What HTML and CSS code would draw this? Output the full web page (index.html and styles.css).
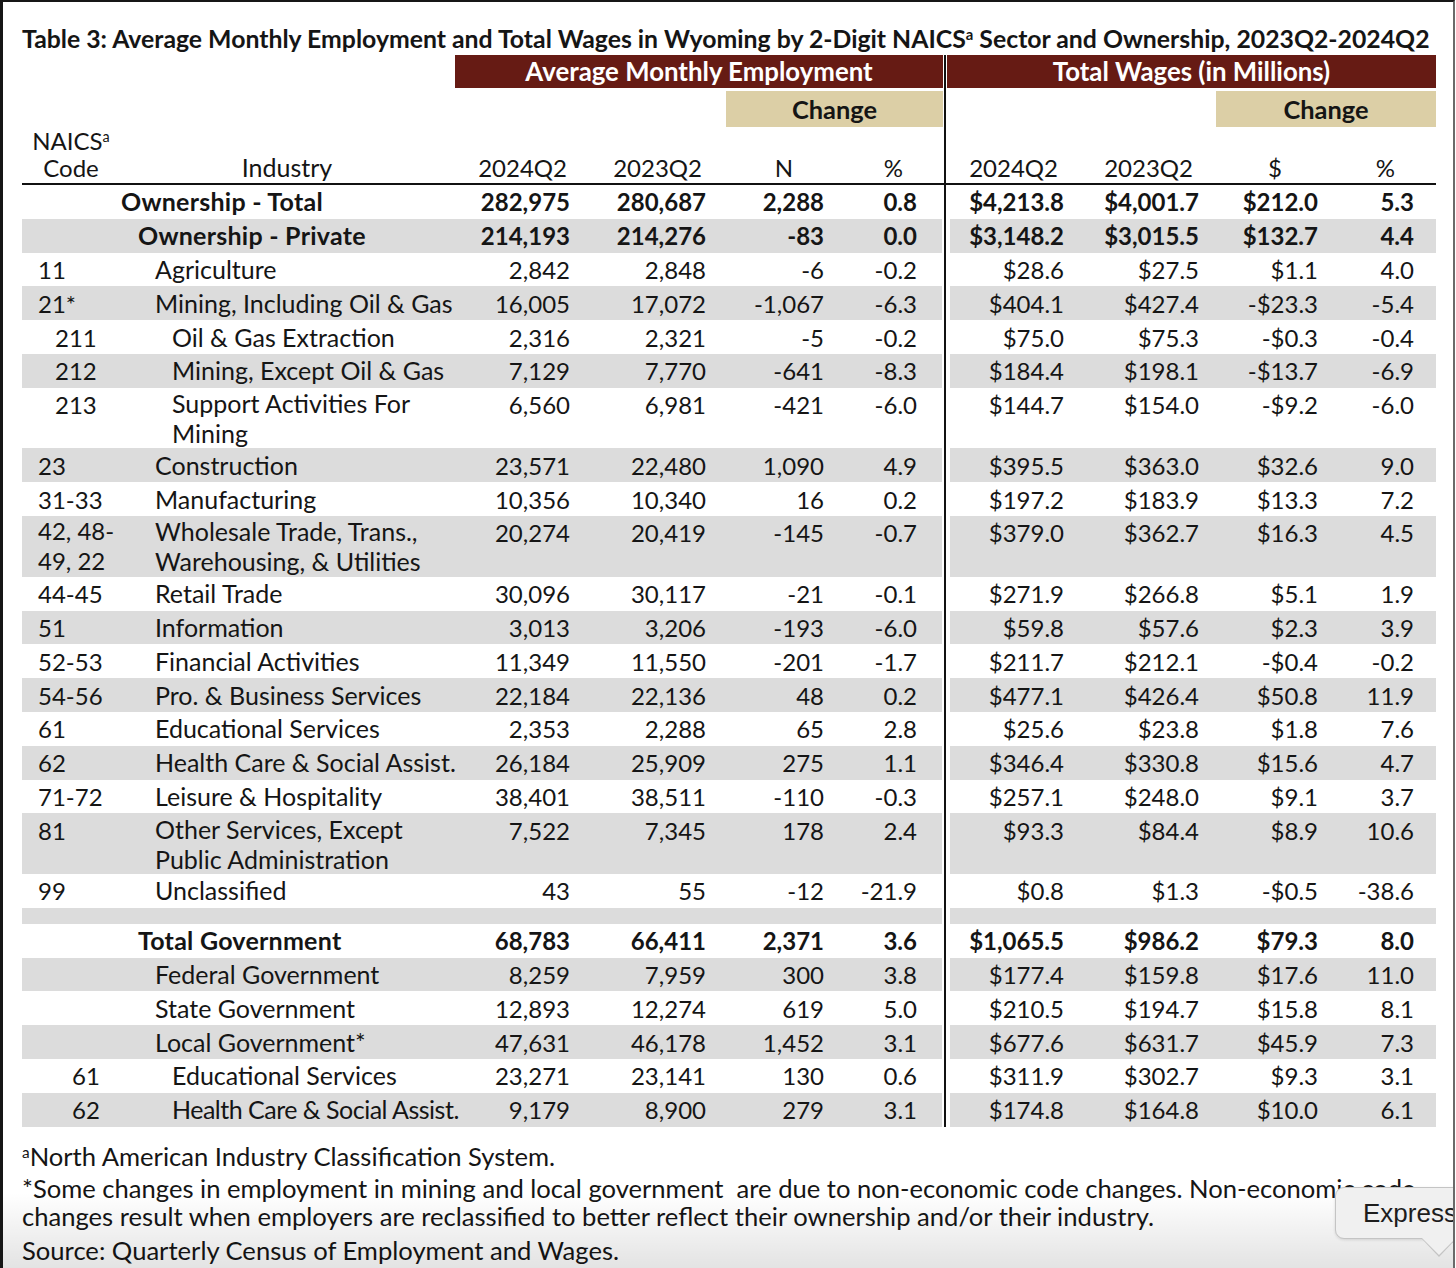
FILE: index.html
```html
<!DOCTYPE html>
<html lang="en">
<head>
<meta charset="utf-8">
<title>Table 3</title>
<link rel="stylesheet" href="styles.css">
</head>
<body>
<div class="page">
  <h1 class="title">Table 3: Average Monthly Employment and Total Wages in Wyoming by 2-Digit NAICS<sup>a</sup> Sector and Ownership, 2023Q2-2024Q2</h1>

  <div class="table">
    <div class="bands">
      <div class="band band-emp">Average Monthly Employment</div>
      <div class="band band-wage">Total Wages (in Millions)</div>
    </div>
    <div class="tans">
      <div class="tan tan-emp">Change</div>
      <div class="tan tan-wage">Change</div>
    </div>

    <div class="row head">
      <div class="c code-h"><span>NAICS<sup>a</sup></span><span>Code</span></div>
      <div class="c ind-h">Industry</div>
      <div class="c n h1">2024Q2</div>
      <div class="c n h2">2023Q2</div>
      <div class="c n h3">N</div>
      <div class="c n h4">%</div>
      <div class="c dv"></div>
      <div class="c n h5">2024Q2</div>
      <div class="c n h6">2023Q2</div>
      <div class="c n h7">$</div>
      <div class="c n h8">%</div>
    </div>

    <div class="row bold">
      <div class="c lab lab-1">Ownership - Total</div>
      <div class="c n">282,975</div><div class="c n">280,687</div><div class="c n">2,288</div><div class="c n pct">0.8</div>
      <div class="c dv"></div>
      <div class="c n">$4,213.8</div><div class="c n">$4,001.7</div><div class="c n">$212.0</div><div class="c n pct2">5.3</div>
    </div>
    <div class="row bold alt">
      <div class="c lab lab-2">Ownership - Private</div>
      <div class="c n">214,193</div><div class="c n">214,276</div><div class="c n">-83</div><div class="c n pct">0.0</div>
      <div class="c dv"></div>
      <div class="c n">$3,148.2</div><div class="c n">$3,015.5</div><div class="c n">$132.7</div><div class="c n pct2">4.4</div>
    </div>
    <div class="row">
      <div class="c code">11</div><div class="c ind">Agriculture</div>
      <div class="c n">2,842</div><div class="c n">2,848</div><div class="c n">-6</div><div class="c n pct">-0.2</div>
      <div class="c dv"></div>
      <div class="c n">$28.6</div><div class="c n">$27.5</div><div class="c n">$1.1</div><div class="c n pct2">4.0</div>
    </div>
    <div class="row alt">
      <div class="c code">21*</div><div class="c ind">Mining, Including Oil &amp; Gas</div>
      <div class="c n">16,005</div><div class="c n">17,072</div><div class="c n">-1,067</div><div class="c n pct">-6.3</div>
      <div class="c dv"></div>
      <div class="c n">$404.1</div><div class="c n">$427.4</div><div class="c n">-$23.3</div><div class="c n pct2">-5.4</div>
    </div>
    <div class="row">
      <div class="c code sub">211</div><div class="c ind sub">Oil &amp; Gas Extraction</div>
      <div class="c n">2,316</div><div class="c n">2,321</div><div class="c n">-5</div><div class="c n pct">-0.2</div>
      <div class="c dv"></div>
      <div class="c n">$75.0</div><div class="c n">$75.3</div><div class="c n">-$0.3</div><div class="c n pct2">-0.4</div>
    </div>
    <div class="row alt">
      <div class="c code sub">212</div><div class="c ind sub">Mining, Except Oil &amp; Gas</div>
      <div class="c n">7,129</div><div class="c n">7,770</div><div class="c n">-641</div><div class="c n pct">-8.3</div>
      <div class="c dv"></div>
      <div class="c n">$184.4</div><div class="c n">$198.1</div><div class="c n">-$13.7</div><div class="c n pct2">-6.9</div>
    </div>
    <div class="row">
      <div class="c code sub">213</div><div class="c ind sub two">Support Activities For<br>Mining</div>
      <div class="c n">6,560</div><div class="c n">6,981</div><div class="c n">-421</div><div class="c n pct">-6.0</div>
      <div class="c dv"></div>
      <div class="c n">$144.7</div><div class="c n">$154.0</div><div class="c n">-$9.2</div><div class="c n pct2">-6.0</div>
    </div>
    <div class="row alt">
      <div class="c code">23</div><div class="c ind">Construction</div>
      <div class="c n">23,571</div><div class="c n">22,480</div><div class="c n">1,090</div><div class="c n pct">4.9</div>
      <div class="c dv"></div>
      <div class="c n">$395.5</div><div class="c n">$363.0</div><div class="c n">$32.6</div><div class="c n pct2">9.0</div>
    </div>
    <div class="row">
      <div class="c code">31-33</div><div class="c ind">Manufacturing</div>
      <div class="c n">10,356</div><div class="c n">10,340</div><div class="c n">16</div><div class="c n pct">0.2</div>
      <div class="c dv"></div>
      <div class="c n">$197.2</div><div class="c n">$183.9</div><div class="c n">$13.3</div><div class="c n pct2">7.2</div>
    </div>
    <div class="row alt">
      <div class="c code two">42, 48-<br>49, 22</div><div class="c ind two">Wholesale Trade, Trans.,<br>Warehousing, &amp; Utilities</div>
      <div class="c n">20,274</div><div class="c n">20,419</div><div class="c n">-145</div><div class="c n pct">-0.7</div>
      <div class="c dv"></div>
      <div class="c n">$379.0</div><div class="c n">$362.7</div><div class="c n">$16.3</div><div class="c n pct2">4.5</div>
    </div>
    <div class="row">
      <div class="c code">44-45</div><div class="c ind">Retail Trade</div>
      <div class="c n">30,096</div><div class="c n">30,117</div><div class="c n">-21</div><div class="c n pct">-0.1</div>
      <div class="c dv"></div>
      <div class="c n">$271.9</div><div class="c n">$266.8</div><div class="c n">$5.1</div><div class="c n pct2">1.9</div>
    </div>
    <div class="row alt">
      <div class="c code">51</div><div class="c ind">Information</div>
      <div class="c n">3,013</div><div class="c n">3,206</div><div class="c n">-193</div><div class="c n pct">-6.0</div>
      <div class="c dv"></div>
      <div class="c n">$59.8</div><div class="c n">$57.6</div><div class="c n">$2.3</div><div class="c n pct2">3.9</div>
    </div>
    <div class="row">
      <div class="c code">52-53</div><div class="c ind">Financial Activities</div>
      <div class="c n">11,349</div><div class="c n">11,550</div><div class="c n">-201</div><div class="c n pct">-1.7</div>
      <div class="c dv"></div>
      <div class="c n">$211.7</div><div class="c n">$212.1</div><div class="c n">-$0.4</div><div class="c n pct2">-0.2</div>
    </div>
    <div class="row alt">
      <div class="c code">54-56</div><div class="c ind">Pro. &amp; Business Services</div>
      <div class="c n">22,184</div><div class="c n">22,136</div><div class="c n">48</div><div class="c n pct">0.2</div>
      <div class="c dv"></div>
      <div class="c n">$477.1</div><div class="c n">$426.4</div><div class="c n">$50.8</div><div class="c n pct2">11.9</div>
    </div>
    <div class="row">
      <div class="c code">61</div><div class="c ind">Educational Services</div>
      <div class="c n">2,353</div><div class="c n">2,288</div><div class="c n">65</div><div class="c n pct">2.8</div>
      <div class="c dv"></div>
      <div class="c n">$25.6</div><div class="c n">$23.8</div><div class="c n">$1.8</div><div class="c n pct2">7.6</div>
    </div>
    <div class="row alt">
      <div class="c code">62</div><div class="c ind">Health Care &amp; Social Assist.</div>
      <div class="c n">26,184</div><div class="c n">25,909</div><div class="c n">275</div><div class="c n pct">1.1</div>
      <div class="c dv"></div>
      <div class="c n">$346.4</div><div class="c n">$330.8</div><div class="c n">$15.6</div><div class="c n pct2">4.7</div>
    </div>
    <div class="row">
      <div class="c code">71-72</div><div class="c ind">Leisure &amp; Hospitality</div>
      <div class="c n">38,401</div><div class="c n">38,511</div><div class="c n">-110</div><div class="c n pct">-0.3</div>
      <div class="c dv"></div>
      <div class="c n">$257.1</div><div class="c n">$248.0</div><div class="c n">$9.1</div><div class="c n pct2">3.7</div>
    </div>
    <div class="row alt">
      <div class="c code">81</div><div class="c ind two">Other Services, Except<br>Public Administration</div>
      <div class="c n">7,522</div><div class="c n">7,345</div><div class="c n">178</div><div class="c n pct">2.4</div>
      <div class="c dv"></div>
      <div class="c n">$93.3</div><div class="c n">$84.4</div><div class="c n">$8.9</div><div class="c n pct2">10.6</div>
    </div>
    <div class="row">
      <div class="c code">99</div><div class="c ind">Unclassified</div>
      <div class="c n">43</div><div class="c n">55</div><div class="c n">-12</div><div class="c n pct">-21.9</div>
      <div class="c dv"></div>
      <div class="c n">$0.8</div><div class="c n">$1.3</div><div class="c n">-$0.5</div><div class="c n pct2">-38.6</div>
    </div>
    <div class="row alt spacer">
      <div class="c lab"></div>
      <div class="c n"></div><div class="c n"></div><div class="c n"></div><div class="c n"></div>
      <div class="c dv"></div>
      <div class="c n"></div><div class="c n"></div><div class="c n"></div><div class="c n"></div>
    </div>
    <div class="row bold">
      <div class="c lab lab-2">Total Government</div>
      <div class="c n">68,783</div><div class="c n">66,411</div><div class="c n">2,371</div><div class="c n pct">3.6</div>
      <div class="c dv"></div>
      <div class="c n">$1,065.5</div><div class="c n">$986.2</div><div class="c n">$79.3</div><div class="c n pct2">8.0</div>
    </div>
    <div class="row alt">
      <div class="c code"></div><div class="c ind">Federal Government</div>
      <div class="c n">8,259</div><div class="c n">7,959</div><div class="c n">300</div><div class="c n pct">3.8</div>
      <div class="c dv"></div>
      <div class="c n">$177.4</div><div class="c n">$159.8</div><div class="c n">$17.6</div><div class="c n pct2">11.0</div>
    </div>
    <div class="row">
      <div class="c code"></div><div class="c ind">State Government</div>
      <div class="c n">12,893</div><div class="c n">12,274</div><div class="c n">619</div><div class="c n pct">5.0</div>
      <div class="c dv"></div>
      <div class="c n">$210.5</div><div class="c n">$194.7</div><div class="c n">$15.8</div><div class="c n pct2">8.1</div>
    </div>
    <div class="row alt">
      <div class="c code"></div><div class="c ind">Local Government*</div>
      <div class="c n">47,631</div><div class="c n">46,178</div><div class="c n">1,452</div><div class="c n pct">3.1</div>
      <div class="c dv"></div>
      <div class="c n">$677.6</div><div class="c n">$631.7</div><div class="c n">$45.9</div><div class="c n pct2">7.3</div>
    </div>
    <div class="row">
      <div class="c code gov">61</div><div class="c ind sub">Educational Services</div>
      <div class="c n">23,271</div><div class="c n">23,141</div><div class="c n">130</div><div class="c n pct">0.6</div>
      <div class="c dv"></div>
      <div class="c n">$311.9</div><div class="c n">$302.7</div><div class="c n">$9.3</div><div class="c n pct2">3.1</div>
    </div>
    <div class="row alt">
      <div class="c code gov">62</div><div class="c ind sub tight">Health Care &amp; Social Assist.</div>
      <div class="c n">9,179</div><div class="c n">8,900</div><div class="c n">279</div><div class="c n pct">3.1</div>
      <div class="c dv"></div>
      <div class="c n">$174.8</div><div class="c n">$164.8</div><div class="c n">$10.0</div><div class="c n pct2">6.1</div>
    </div>
  </div>

  <div class="notes">
    <p class="note"><sup>a</sup>North American Industry Classification System.</p>
    <p class="note">*Some changes in employment in mining and local government&nbsp; are due to non-economic code changes. Non-economic code<br>changes result when employers are reclassified to better reflect their ownership and/or their industry.</p>
    <p class="note src">Source: Quarterly Census of Employment and Wages.</p>
  </div>

  <div class="shade"></div>
  <div class="tip">Express</div>
</div>
</body>
</html>
```

FILE: styles.css
```css
html, body {
  margin: 0;
  padding: 0;
  background: #ffffff;
}

.page {
  position: relative;
  box-sizing: border-box;
  width: 1455px;
  height: 1268px;
  overflow: hidden;
  border-left: 3px solid #161616;
  border-top: 2px solid #161616;
  border-right: 2px solid #6a6a6a;
  padding: 0 0 0 19px;
  font-family: "Lato", "Open Sans", sans-serif;
  color: #151515;
  font-size: 24px;
}

.title {
  margin: 22px 0 2px 0;
  font-size: 24.8px;
  line-height: 29px;
  font-weight: 700;
  white-space: nowrap;
}

sup {
  font-size: 0.6em;
  line-height: 0;
  vertical-align: 0.55em;
}

.table {
  width: 1414px;
  background: linear-gradient(#111111, #111111) no-repeat 922px 0 / 2px 100%;
}

.bands {
  display: flex;
  height: 33px;
}

.band {
  background: #661b14;
  color: #ffffff;
  font-weight: 700;
  font-size: 25.8px;
  text-align: center;
  line-height: 33px;
}

.band-emp {
  margin-left: 433px;
  width: 488px;
}

.band-wage {
  margin-left: 4px;
  width: 489px;
}

.tans {
  display: flex;
  height: 36px;
  margin-top: 3px;
}

.tan {
  background: #dccfa6;
  font-weight: 700;
  font-size: 25.4px;
  text-align: center;
  line-height: 36px;
}

.tan-emp {
  margin-left: 704px;
  width: 217px;
}

.tan-wage {
  margin-left: 273px;
  width: 220px;
}

.row {
  display: grid;
  grid-template-columns: 118px 320px 115px 136px 118px 113px 8px 119px 135px 119px 113px;
  line-height: 27px;
}

.c {
  padding-top: 3.4px;
  padding-bottom: 3.4px;
  white-space: nowrap;
}

.c.two {
  line-height: 30px;
  padding-top: 0.4px;
  padding-bottom: 0.4px;
}

.alt .c {
  background: #dcdcdc;
}

.alt .dv {
  background: transparent;
}

.head {
  height: 56px;
  border-bottom: 2px solid #111111;
  align-items: end;
}

.head .c {
  padding-top: 0;
  padding-bottom: 2px;
}

.code-h {
  display: flex;
  flex-direction: column;
  align-items: center;
  width: 78px;
  padding-left: 10px;
}

.ind-h {
  text-align: center;
  font-size: 25px;
  padding-right: 26px;
}

.n {
  text-align: right;
  padding-right: 5px;
}

.c.h1 { padding-right: 8px; }
.c.h2 { padding-right: 9px; }
.c.h3 { padding-right: 36px; }
.c.h4 { padding-right: 39px; }
.c.h5 { padding-right: 11px; }
.c.h6 { padding-right: 11px; }
.c.h7 { padding-right: 41px; }
.c.h8 { padding-right: 41px; }

.pct { padding-right: 25px; }
.pct2 { padding-right: 22px; }

.code { padding-left: 16px; }
.code.sub { padding-left: 33px; }
.code.gov { padding-left: 50px; }

.ind {
  padding-left: 15px;
  font-size: 25px;
}

.ind.sub { padding-left: 32px; }

.ind.tight { letter-spacing: -0.5px; }

.lab {
  grid-column: 1 / 3;
  font-size: 25px;
  letter-spacing: 0.25px;
}

.lab-1 { padding-left: 99px; }
.lab-2 { padding-left: 116px; }

.bold { font-weight: 700; }

.spacer .c {
  padding-top: 0;
  padding-bottom: 0;
  height: 16px;
}

.notes {
  margin-top: 15px;
  font-size: 25.6px;
}

.note {
  margin: 0 0 4px 0;
  line-height: 28px;
  white-space: nowrap;
}

.note.src {
  margin-top: 6px;
}

.shade {
  position: absolute;
  left: 0;
  right: 0;
  bottom: 0;
  height: 75px;
  background: linear-gradient(rgba(0, 0, 0, 0), rgba(0, 0, 0, 0.11));
  pointer-events: none;
}

.tip {
  position: absolute;
  left: 1332px;
  top: 1185px;
  width: 160px;
  height: 52px;
  box-sizing: border-box;
  padding-left: 27px;
  background: #f0f0f0;
  border: 1px solid #c4c4c4;
  border-radius: 9px;
  box-shadow: 0 1px 3px rgba(0, 0, 0, 0.12);
  font-family: "Liberation Sans", "Inter", sans-serif;
  font-size: 26px;
  line-height: 50px;
  color: #1d1d1d;
}

.tip::before,
.tip::after {
  content: "";
  position: absolute;
  width: 0;
  height: 0;
  border-left: 18px solid transparent;
  border-right: 18px solid transparent;
}

.tip::before {
  left: 85px;
  top: 50px;
  border-top: 19px solid #c4c4c4;
}

.tip::after {
  left: 85px;
  top: 49px;
  border-top: 18px solid #f0f0f0;
}
```
